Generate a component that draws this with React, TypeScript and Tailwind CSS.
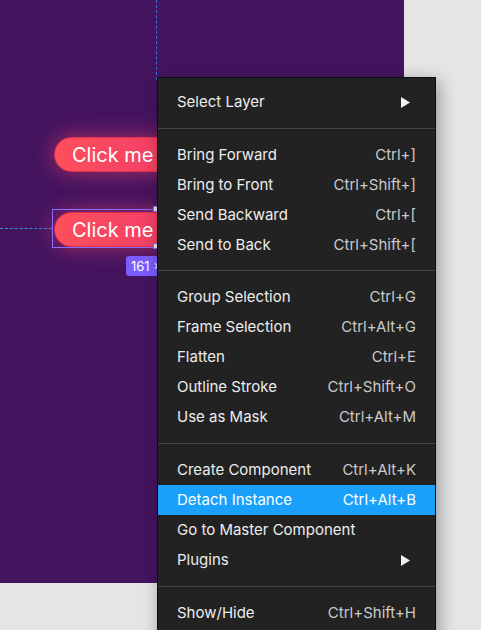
import React from 'react';

type Item = { label: string; shortcut?: string; submenu?: boolean; active?: boolean };

const groups: Item[][] = [
  [{ label: 'Select Layer', submenu: true }],
  [
    { label: 'Bring Forward', shortcut: 'Ctrl+]' },
    { label: 'Bring to Front', shortcut: 'Ctrl+Shift+]' },
    { label: 'Send Backward', shortcut: 'Ctrl+[' },
    { label: 'Send to Back', shortcut: 'Ctrl+Shift+[' },
  ],
  [
    { label: 'Group Selection', shortcut: 'Ctrl+G' },
    { label: 'Frame Selection', shortcut: 'Ctrl+Alt+G' },
    { label: 'Flatten', shortcut: 'Ctrl+E' },
    { label: 'Outline Stroke', shortcut: 'Ctrl+Shift+O' },
    { label: 'Use as Mask', shortcut: 'Ctrl+Alt+M' },
  ],
  [
    { label: 'Create Component', shortcut: 'Ctrl+Alt+K' },
    { label: 'Detach Instance', shortcut: 'Ctrl+Alt+B', active: true },
    { label: 'Go to Master Component' },
    { label: 'Plugins', submenu: true },
  ],
  [{ label: 'Show/Hide', shortcut: 'Ctrl+Shift+H' }],
];

function Arrow() {
  return (
    <svg width="9" height="11" viewBox="0 0 9 11" className="mr-[6px]">
      <polygon points="0,0 9,5.5 0,11" fill="#f2f2f2" />
    </svg>
  );
}

function MenuRow({ item }: { item: Item }) {
  return (
    <div
      className={`flex items-center justify-between h-[30px] px-[19px] ${
        item.active ? 'bg-[#18a0fb] text-white' : 'text-[#ededed]'
      }`}
    >
      <span>{item.label}</span>
      {item.shortcut && (
        <span className={item.active ? 'text-white' : 'text-[#c9c9c9]'}>{item.shortcut}</span>
      )}
      {item.submenu && <Arrow />}
    </div>
  );
}

function ClickButton({ top }: { top: string }) {
  return (
    <div
      className={`absolute left-[54px] ${top} h-[35px] w-[150px] rounded-full border border-[#e0304f] bg-gradient-to-r from-[#fd4f5b] to-[#ef386b] shadow-[0_0_22px_rgba(255,70,110,0.55)] flex items-center pl-[17px] text-white text-[20px]`}
    >
      Click me
    </div>
  );
}

export default function App() {
  return (
    <div className="relative w-[481px] h-[630px] bg-[#e5e5e5] overflow-hidden font-['Inter',sans-serif]">
      {/* canvas */}
      <div className="relative w-[404px] h-[583px] bg-[#44145f]">
        <div className="absolute left-[156px] top-0 h-[80px] border-l border-dashed border-[#3b6fe0]" />
        <div className="absolute left-0 top-[228px] w-[52px] border-t border-dashed border-[#3b8be0]" />
        <ClickButton top="top-[137px]" />
        <ClickButton top="top-[212px]" />
        <div className="absolute left-[52px] top-[209px] w-[108px] h-[39px] border border-[#8b6cff]" />
        <div className="absolute left-[153px] top-[206px] w-[6px] h-[6px] bg-[#e8e4ff] border border-[#8b6cff]" />
        <div className="absolute left-[153px] top-[243px] w-[6px] h-[6px] bg-[#e8e4ff] border border-[#8b6cff]" />
        <div className="absolute left-[126px] top-[256px] h-[20px] px-[5px] rounded-[3px] bg-[#7b5cff] text-white text-[13px] leading-[20px]">
          161 × 35
        </div>
      </div>

      {/* context menu */}
      <div className="absolute left-[157px] top-[77px] w-[279px] bg-[#222222] border border-[#0e0e0e] shadow-[3px_4px_16px_rgba(0,0,0,0.35)] pt-[9px] text-[15px]">
        {groups.map((g, i) => (
          <div key={i}>
            {i > 0 && (
              <div className={`${i === 2 ? 'mt-[10px]' : 'mt-[11px]'} mb-[11px] h-px bg-[#444444]`} />
            )}
            {g.map((item) => (
              <MenuRow key={item.label} item={item} />
            ))}
          </div>
        ))}
        <div className="h-[20px]" />
      </div>
    </div>
  );
}
